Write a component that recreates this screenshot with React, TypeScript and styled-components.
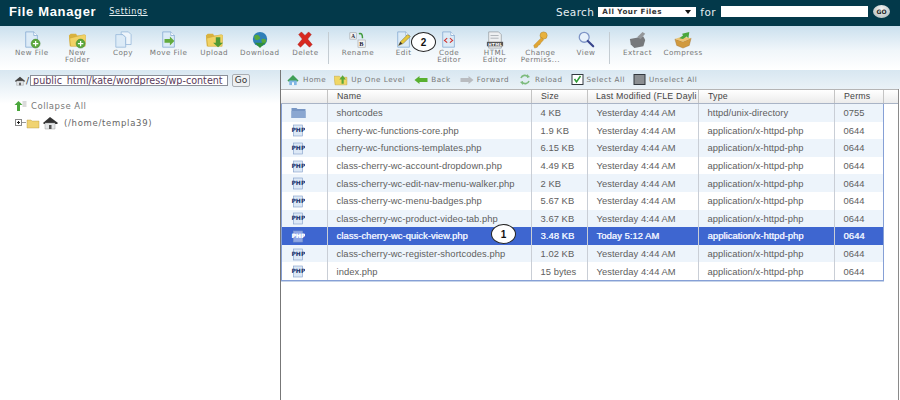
import React from 'react';
import styled, { createGlobalStyle } from 'styled-components';

const GlobalStyle = createGlobalStyle`
  html, body {
    margin: 0;
    padding: 0;
    width: 900px;
    height: 400px;
    overflow: hidden;
    background: #fff;
  }
  * { box-sizing: border-box; }
`;

const Page = styled.div`
  position: relative;
  width: 900px;
  height: 400px;
  overflow: hidden;
  font-family: "DejaVu Sans", Verdana, sans-serif;
  color: #666;
`;

const TopBar = styled.header`
  height: 26px;
  background: #03394a;
  display: flex;
  align-items: center;
  padding: 0 10px 3px 9px;
  color: #fff;
`;

const Title = styled.div`
  font: bold 13px "Liberation Sans", Arial, sans-serif;
  letter-spacing: 0.65px;
`;

const SettingsLink = styled.a`
  margin-left: 13px;
  font: 8px "DejaVu Sans", Verdana, sans-serif;
  letter-spacing: 0.7px;
  text-decoration: underline;
  color: #e8f0f3;
`;

const SearchArea = styled.div`
  margin-left: auto;
  display: flex;
  align-items: center;
  gap: 4px;
  font: 10.5px "DejaVu Sans", Verdana, sans-serif;
  letter-spacing: 0.4px;
  color: #e6eef1;
`;

const SearchSelect = styled.div`
  width: 98px;
  height: 10px;
  background: #fff;
  color: #333;
  font: bold 7.2px "DejaVu Sans", Verdana, sans-serif;
  letter-spacing: 0.5px;
  display: flex;
  align-items: center;
  justify-content: space-between;
  padding: 0 5px 0 4px;
  &::after {
    content: '';
    border-left: 3px solid transparent;
    border-right: 3px solid transparent;
    border-top: 4px solid #111;
  }
`;

const SearchInput = styled.div`
  width: 147px;
  height: 11px;
  margin-left: 1px;
  background: #fff;
`;

const GoRound = styled.div`
  width: 17px;
  height: 13px;
  border-radius: 50%;
  margin-left: 1px;
  background: radial-gradient(circle at 50% 30%, #f5f5f5, #a9b4b6);
  color: #222;
  font: bold 6px "DejaVu Sans", Verdana, sans-serif;
  letter-spacing: 0;
  display: flex;
  align-items: center;
  justify-content: center;
`;

const Toolbar = styled.nav`
  height: 44px;
  padding: 5px 0 0 9px;
  background: linear-gradient(#cbe0ee 0%, #f0f6fa 55%, #ffffff 100%);
  display: flex;
  align-items: flex-start;
`;

const ToolButton = styled.div`
  width: 45.6px;
  flex: none;
  display: flex;
  flex-direction: column;
  align-items: center;
  font-size: 7.2px;
  line-height: 7.2px;
  letter-spacing: 0.45px;
  text-align: center;
  color: #777;
  white-space: nowrap;
  svg { display: block; margin-bottom: 0; }
`;

const ToolSeparator = styled.div`
  flex: none;
  width: 1px;
  height: 32px;
  background: #c4ccd2;
  margin: 1px 0 0 0;
`;

const ToolGap = styled.div<{ $w: number }>`
  flex: none;
  width: ${(p) => p.$w}px;
`;

const Main = styled.div`
  display: flex;
  height: 330px;
`;

const LeftPane = styled.aside`
  width: 280px;
  flex: none;
  background: linear-gradient(#d8e7f1 0, #ffffff 34px);
  padding-top: 3px;
`;

const PathRow = styled.div`
  display: flex;
  align-items: center;
  height: 15px;
  padding-left: 14px;
`;

const Slash = styled.span`
  font-size: 9px;
  color: #333;
`;

const PathInput = styled.div`
  width: 198px;
  height: 11px;
  background: #fff;
  border: 1px solid #8a8f99;
  color: #5a3a5a;
  font-size: 9.6px;
  line-height: 9px;
  padding-left: 2px;
  overflow: hidden;
  white-space: nowrap;
  margin-left: 1px;
`;

const PathGo = styled.div`
  width: 18px;
  height: 13px;
  margin-left: 4px;
  background: #eceff1;
  border: 1px solid #a8aeb3;
  border-radius: 2px;
  color: #333;
  font: 9px "DejaVu Sans", Verdana, sans-serif;
  line-height: 11px;
  text-align: center;
`;

const CollapseRow = styled.div`
  display: flex;
  align-items: center;
  gap: 4px;
  margin: 13px 0 0 14px;
  font-size: 8.5px;
  letter-spacing: 0.5px;
  color: #777;
`;

const TreeRow = styled.div`
  display: flex;
  align-items: center;
  margin: 5px 0 0 15px;
  font-size: 8.5px;
  letter-spacing: 0.7px;
  color: #666;
`;

const TreeLabel = styled.span`
  margin-left: 5px;
`;

const RightPane = styled.section`
  flex: 1;
  border-left: 1px solid #777;
  display: flex;
  flex-direction: column;
  position: relative;
`;

const NavBar = styled.div`
  height: 19px;
  flex: none;
  background: linear-gradient(#d8e7f1, #eaf2f7);
  display: flex;
  align-items: center;
  padding-left: 5px;
  font-size: 7.2px;
  letter-spacing: 0.5px;
  color: #777;
  white-space: nowrap;
`;

const NavItem = styled.span<{ $gap: number }>`
  display: flex;
  align-items: center;
  gap: 3px;
  margin-right: ${(p) => p.$gap}px;
`;

const HeaderRow = styled.div`
  display: grid;
  grid-template-columns: 47px 204px 56px 111px 136px 49px 1fr;
  height: 15px;
  flex: none;
  margin-right: 1px;
  background: linear-gradient(#ffffff, #ececec);
  border-top: 1px solid #b5b5b5;
  border-bottom: 1px solid #a9b4c6;
  font: 8.8px "Liberation Sans", Arial, sans-serif;
  letter-spacing: 0.2px;
  color: #444;
`;

const HeaderCell = styled.div<{ $pad: number }>`
  border-right: 1px solid #c4c4c4;
  padding-left: ${(p) => p.$pad}px;
  line-height: 13px;
  white-space: nowrap;
  overflow: hidden;
`;

const FileTable = styled.div`
  width: 603px;
  border: 1px solid #86a0d6;
  border-top: none;
  box-shadow: 0 1px 0 #c6d4ea;
`;

const FileRow = styled.div<{ $odd: boolean; $selected: boolean }>`
  display: grid;
  grid-template-columns: 46px 204px 56px 111px 136px 48px;
  height: 17.6px;
  background: ${(p) => (p.$selected ? '#3e66d0' : p.$odd ? '#edf4fb' : '#ffffff')};
  color: ${(p) => (p.$selected ? '#eaf0ff' : '#5e5e5e')};
  font: 9.4px "Liberation Sans", Arial, sans-serif;
  letter-spacing: 0.05px;
  text-shadow: ${(p) => (p.$selected ? '0.35px 0 0 #eaf0ff' : 'none')};
`;

const FileCell = styled.div<{ $pad?: number }>`
  display: flex;
  align-items: center;
  padding-left: ${(p) => p.$pad ?? 8.5}px;
  border-right: 1px solid #c9ced6;
  white-space: nowrap;
  overflow: hidden;
  &:last-child { border-right: none; }
`;

const Callout = styled.div<{ $x: number; $y: number; $w: number; $h: number }>`
  position: absolute;
  left: ${(p) => p.$x}px;
  top: ${(p) => p.$y}px;
  width: ${(p) => p.$w}px;
  height: ${(p) => p.$h}px;
  border: 1.5px solid #222;
  border-radius: 50%;
  background: #fff;
  color: #111;
  font: bold 10px "Liberation Sans", Arial, sans-serif;
  display: flex;
  align-items: center;
  justify-content: center;
`;

const RightEdge = styled.div`
  position: absolute;
  right: 1px;
  top: 19px;
  bottom: 0;
  width: 1px;
  background: #8a8a8a;
`;

const Sheet = ({ children }: { children?: React.ReactNode }) => (
  <>
    <path d="M3 1h9l4 4v13H3z" fill="#dcebf7" stroke="#7fa6cf" strokeWidth="0.8" />
    <path d="M12 1v4h4" fill="#fff" stroke="#7fa6cf" strokeWidth="0.8" />
    {children}
  </>
);

const Plus = () => (
  <>
    <circle cx="14" cy="14" r="5" fill="#5aa83c" stroke="#3f7e2a" strokeWidth="0.5" />
    <path d="M14 11v6M11 14h6" stroke="#fff" strokeWidth="1.4" />
  </>
);

const Folder = ({ fill = '#f1d264' }: { fill?: string }) => (
  <>
    <path d="M1 5l2-2h6l1 2h9v12H2z" fill="#d9b23f" />
    <path d="M2 8l16-4 2 1-1 12H3z" fill={fill} stroke="#c49c2e" strokeWidth="0.4" />
  </>
);

const toolIcons: Record<string, React.ReactNode> = {
  newFile: <Sheet><Plus /></Sheet>,
  newFolder: <><Folder /><Plus /></>,
  copy: (
    <>
      <path d="M2 4h8l3 3v11H2z" fill="#dcebf7" stroke="#8fb2d6" strokeWidth="0.8" />
      <path d="M8 1h8l3 3v11h-6V7l-3-3H8z" fill="#eef5fb" stroke="#8fb2d6" strokeWidth="0.8" />
    </>
  ),
  moveFile: <Sheet><path d="M5 9h6V6l5 5-5 5v-3H5z" fill="#63ab3e" /></Sheet>,
  upload: <><Folder /><path d="M12 7h5v6h3l-5.500 5-5.500-5h3z" fill="#4f9a34" /></>,
  download: (
    <>
      <circle cx="10" cy="9" r="8" fill="#2f7fb8" />
      <path d="M4 5c3-2 5 0 6 2s-2 3-4 3-3-3-2-5zM12 9c2-1 5 0 5 2s-3 4-4 3-2-4-1-5z" fill="#58a83b" />
      <path d="M4 13h12l-6 6z" fill="#2f8f3a" />
    </>
  ),
  delete: <path d="M3 4l3-3 4 4 4-4 3 3-4 5 5 6-3 3-5-5-5 5-3-3 5-6z" fill="#d8281f" stroke="#9c1d18" strokeWidth="0.5" />,
  rename: (
    <>
      <rect x="1" y="2" width="7" height="7" fill="#f3f3f3" stroke="#999" strokeWidth="0.6" />
      <rect x="10" y="10" width="8" height="8" fill="#f3f3f3" stroke="#999" strokeWidth="0.6" />
      <path d="M11 3c3-1 4 1 4 5" fill="none" stroke="#3f9a3a" strokeWidth="1.6" />
      <text x="2.500" y="8" fontSize="6" fontFamily="Liberation Serif" fontWeight="bold" fill="#223">A</text>
      <text x="11.500" y="17" fontSize="7" fontFamily="Liberation Serif" fontWeight="bold" fill="#223">B</text>
    </>
  ),
  edit: (
    <Sheet>
      <path d="M4 16l2-4 8-8 3 2-8 8z" fill="#e6c73c" stroke="#6c6030" strokeWidth="0.5" />
      <path d="M4 16l2-4 2 2z" fill="#333" />
    </Sheet>
  ),
  code: (
    <Sheet>
      <path d="M8 8l-3 2.500L8 13M11 8l3 2.500L11 13" fill="none" stroke="#d0302c" strokeWidth="1.200" />
    </Sheet>
  ),
  html: (
    <>
      <path d="M3 1h11l3 3v15H3z" fill="#eef0f2" stroke="#8a8f94" strokeWidth="0.7" />
      <path d="M5 5h9M5 8h9" stroke="#9aa0a6" strokeWidth="0.8" />
      <rect x="1" y="12" width="18" height="5" fill="#555" />
      <text x="2.500" y="16.200" fontSize="4.500" fontFamily="DejaVu Sans" fontWeight="bold" fill="#fff">HTML</text>
    </>
  ),
  perms: (
    <>
      <circle cx="14" cy="5" r="4" fill="#e8b23e" stroke="#a77a20" strokeWidth="0.5" />
      <path d="M12 7L3 16l1 3 3-1 1-2 2-1 1-2 3-3z" fill="#e0a534" stroke="#a77a20" strokeWidth="0.4" />
    </>
  ),
  view: (
    <>
      <circle cx="8" cy="7" r="5.500" fill="#e7f1fb" stroke="#7e94c6" strokeWidth="1.400" />
      <path d="M12 11l6 6" stroke="#39458c" strokeWidth="2.400" strokeLinecap="round" />
    </>
  ),
  extract: (
    <>
      <path d="M1 9l15-3 2 4-2 7-10 2-4-4z" fill="#77797c" />
      <path d="M9 7l6-6 3 2-5 6z" fill="#94979a" />
    </>
  ),
  compress: (
    <>
      <path d="M1 9l9 3 9-4-2 8-7 3-7-3z" fill="#d19a3f" stroke="#96692a" strokeWidth="0.4" />
      <path d="M1 9l8-3 10 2-9 4z" fill="#ecc372" />
      <path d="M6 8l4-3-1-2 8-2-1 7-2-2-4 3z" fill="#4aa63c" />
    </>
  ),
};

const ToolIcon = ({ name }: { name: string }) => (
  <svg width="18" height="18" viewBox="0 0 20 20">{toolIcons[name]}</svg>
);

const Tool = ({ icon, label }: { icon: string; label: React.ReactNode }) => (
  <ToolButton>
    <ToolIcon name={icon} />
    <span>{label}</span>
  </ToolButton>
);

const HomeIcon = () => (
  <svg width="12" height="12" viewBox="0 0 14 14">
    <path d="M1 7l6-5 6 5-1 1H2z" fill="#444" />
    <path d="M3 7h8v5H3z" fill="#dfe3e6" stroke="#888" strokeWidth="0.4" />
    <rect x="6" y="9" width="2" height="3" fill="#555" />
  </svg>
);

const NavHome = () => (
  <svg width="14" height="12" viewBox="0 0 14 13">
    <path d="M1 7l6-6 6 6-1 1H2z" fill="#3f9f57" />
    <path d="M3 7h8v5H3z" fill="#7fb6e4" />
    <rect x="6" y="9" width="2" height="3" fill="#fff" />
  </svg>
);

const NavUp = () => (
  <svg width="14" height="12" viewBox="0 0 13 11">
    <path d="M0 2h5l1 1h6v7H1z" fill="#f0d765" stroke="#bd9b2e" strokeWidth="0.4" />
    <path d="M7 9V5H5l3-4 3 4H9v4z" fill="#59a83b" />
  </svg>
);

const Arrow = ({ color, flip }: { color: string; flip?: boolean }) => (
  <svg width="14" height="8" viewBox="0 0 13 8" style={flip ? { transform: 'scaleX(-1)' } : undefined}>
    <path d="M0 4l5-4v2h8v4H5v2z" fill={color} />
  </svg>
);

const ReloadIcon = () => (
  <svg width="14" height="11" viewBox="0 0 12 11">
    <path d="M2 4a4 4 0 0 1 7-1M10 7a4 4 0 0 1-7 1" fill="none" stroke="#7dbb7d" strokeWidth="1.600" />
    <path d="M8 0l3 3-3 1zM4 11L1 8l3-1z" fill="#7dbb7d" />
  </svg>
);

const CheckBox = ({ checked }: { checked?: boolean }) => (
  <svg width="13" height="11" viewBox="0 0 12 11">
    <rect x="0.500" y="0.500" width="11" height="10" fill={checked ? '#fff' : '#8b8e91'} stroke="#33393f" />
    {checked && <path d="M3 5l2 3 4-6" fill="none" stroke="#2f9a35" strokeWidth="1.500" />}
  </svg>
);

const CollapseIcon = () => (
  <svg width="13" height="10" viewBox="0 0 12 10">
    <path d="M4 0l4 4H5.500v6h-3V4H0z" fill="#4aa63c" />
    <path d="M8 1h4M8 3h4M8 5h4" stroke="#a5a5a5" strokeWidth="0.800" />
  </svg>
);

const TreeIcons = () => (
  <svg width="44" height="14" viewBox="0 0 44 14">
    <rect x="0.500" y="3.500" width="6" height="6" fill="#fff" stroke="#888" />
    <path d="M2 6.500h3M3.500 5v3" stroke="#222" />
    <path d="M7 6.500h4" stroke="#999" />
    <path d="M12 4h4l1 1h7v7H12z" fill="#f0d372" stroke="#b3933a" strokeWidth="0.400" />
    <path d="M28 7l7-6 8 6-1 1H29z" fill="#333" />
    <path d="M30 7h10v6H30z" fill="#e4e6e8" stroke="#888" strokeWidth="0.400" />
    <rect x="34" y="9" width="2.500" height="4" fill="#555" />
  </svg>
);

const PhpIcon = ({ selected }: { selected?: boolean }) => (
  <svg width="14" height="14" viewBox="0 0 14 14">
    <rect x="2.500" y="2" width="9" height="11" fill={selected ? '#8ea6e6' : '#dce8f6'} stroke="#7f9cc9" strokeWidth="0.600" />
    <text x="0.400" y="9" fontSize="6" fontWeight="bold" fontFamily="DejaVu Sans" fill={selected ? '#fff' : '#16336e'}>PHP</text>
  </svg>
);

const FolderIcon = () => (
  <svg width="15" height="11" viewBox="0 0 14 11">
    <path d="M0 1h5l1 1h8v9H0z" fill="#7896c4" />
    <path d="M0 4h14v7H0z" fill="#8ba7d1" />
  </svg>
);

const files = [
  { name: 'shortcodes', size: '4 KB', modified: 'Yesterday 4:44 AM', type: 'httpd/unix-directory', perms: '0755', folder: true },
  { name: 'cherry-wc-functions-core.php', size: '1.9 KB', modified: 'Yesterday 4:44 AM', type: 'application/x-httpd-php', perms: '0644' },
  { name: 'cherry-wc-functions-templates.php', size: '6.15 KB', modified: 'Yesterday 4:44 AM', type: 'application/x-httpd-php', perms: '0644' },
  { name: 'class-cherry-wc-account-dropdown.php', size: '4.49 KB', modified: 'Yesterday 4:44 AM', type: 'application/x-httpd-php', perms: '0644' },
  { name: 'class-cherry-wc-edit-nav-menu-walker.php', size: '2 KB', modified: 'Yesterday 4:44 AM', type: 'application/x-httpd-php', perms: '0644' },
  { name: 'class-cherry-wc-menu-badges.php', size: '5.67 KB', modified: 'Yesterday 4:44 AM', type: 'application/x-httpd-php', perms: '0644' },
  { name: 'class-cherry-wc-product-video-tab.php', size: '3.67 KB', modified: 'Yesterday 4:44 AM', type: 'application/x-httpd-php', perms: '0644' },
  { name: 'class-cherry-wc-quick-view.php', size: '3.48 KB', modified: 'Today 5:12 AM', type: 'application/x-httpd-php', perms: '0644', selected: true },
  { name: 'class-cherry-wc-register-shortcodes.php', size: '1.02 KB', modified: 'Yesterday 4:44 AM', type: 'application/x-httpd-php', perms: '0644' },
  { name: 'index.php', size: '15 bytes', modified: 'Yesterday 4:44 AM', type: 'application/x-httpd-php', perms: '0644' },
];

export default function App() {
  return (
    <Page>
      <GlobalStyle />
      <TopBar>
        <Title>File Manager</Title>
        <SettingsLink>Settings</SettingsLink>
        <SearchArea>
          <span>Search</span>
          <SearchSelect>All Your Files</SearchSelect>
          <span>for</span>
          <SearchInput />
          <GoRound>GO</GoRound>
        </SearchArea>
      </TopBar>
      <Toolbar>
        <Tool icon="newFile" label="New File" />
        <Tool icon="newFolder" label={<>New<br />Folder</>} />
        <Tool icon="copy" label="Copy" />
        <Tool icon="moveFile" label="Move File" />
        <Tool icon="upload" label="Upload" />
        <Tool icon="download" label="Download" />
        <Tool icon="delete" label="Delete" />
        <ToolSeparator />
        <ToolGap $w={6} />
        <Tool icon="rename" label="Rename" />
        <Tool icon="edit" label="Edit" />
        <Tool icon="code" label={<>Code<br />Editor</>} />
        <Tool icon="html" label={<>HTML<br />Editor</>} />
        <Tool icon="perms" label={<>Change<br />Permiss...</>} />
        <Tool icon="view" label="View" />
        <ToolSeparator />
        <ToolGap $w={5} />
        <Tool icon="extract" label="Extract" />
        <Tool icon="compress" label="Compress" />
      </Toolbar>
      <Main>
        <LeftPane>
          <PathRow>
            <HomeIcon />
            <Slash>/</Slash>
            <PathInput>public_html/kate/wordpress/wp-content</PathInput>
            <PathGo>Go</PathGo>
          </PathRow>
          <CollapseRow>
            <CollapseIcon />
            Collapse All
          </CollapseRow>
          <TreeRow>
            <TreeIcons />
            <TreeLabel>(/home/templa39)</TreeLabel>
          </TreeRow>
        </LeftPane>
        <RightPane>
          <NavBar>
            <NavItem $gap={8}><NavHome />Home</NavItem>
            <NavItem $gap={9}><NavUp />Up One Level</NavItem>
            <NavItem $gap={9}><Arrow color="#58b030" />Back</NavItem>
            <NavItem $gap={9}><Arrow color="#b9bcc0" flip />Forward</NavItem>
            <NavItem $gap={8}><ReloadIcon />Reload</NavItem>
            <NavItem $gap={8}><CheckBox checked />Select All</NavItem>
            <NavItem $gap={8}><CheckBox />Unselect All</NavItem>
          </NavBar>
          <HeaderRow>
            <HeaderCell $pad={0} />
            <HeaderCell $pad={9}>Name</HeaderCell>
            <HeaderCell $pad={9}>Size</HeaderCell>
            <HeaderCell $pad={8}>Last Modified (FLE Dayli</HeaderCell>
            <HeaderCell $pad={9}>Type</HeaderCell>
            <HeaderCell $pad={9}>Perms</HeaderCell>
            <HeaderCell $pad={0} />
          </HeaderRow>
          <FileTable>
            {files.map((f, i) => (
              <FileRow key={f.name} $odd={i % 2 === 0} $selected={!!f.selected}>
                <FileCell $pad={9}>
                  {f.folder ? <FolderIcon /> : <PhpIcon selected={f.selected} />}
                </FileCell>
                <FileCell>{f.name}</FileCell>
                <FileCell>{f.size}</FileCell>
                <FileCell>{f.modified}</FileCell>
                <FileCell>{f.type}</FileCell>
                <FileCell>{f.perms}</FileCell>
              </FileRow>
            ))}
          </FileTable>
          <RightEdge />
        </RightPane>
      </Main>
      <Callout $x={411} $y={32} $w={25} $h={20}>2</Callout>
      <Callout $x={491} $y={224} $w={25} $h={20}>1</Callout>
    </Page>
  );
}
